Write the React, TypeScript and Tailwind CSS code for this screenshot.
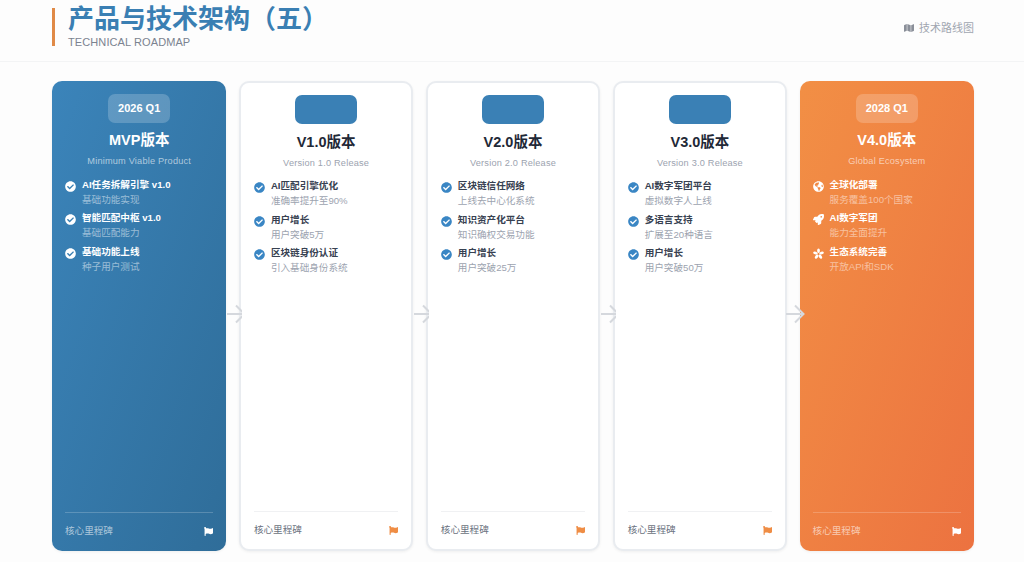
import { FaCheckCircle, FaFlag, FaGlobeAmericas, FaMap, FaRocket } from 'react-icons/fa';
import type { ReactNode } from 'react';

type Item = { title: string; desc: string; icon?: ReactNode };

type Phase = {
  tag: string;
  name: string;
  sub: string;
  items: Item[];
  tone: 'blue' | 'white' | 'orange';
};

function EcoIcon() {
  return (
    <svg viewBox="0 0 24 24" width="12" height="12" fill="currentColor">
      <ellipse cx="12" cy="5" rx="3" ry="5" />
      <ellipse cx="12" cy="5" rx="3" ry="5" transform="rotate(72 12 12)" />
      <ellipse cx="12" cy="5" rx="3" ry="5" transform="rotate(144 12 12)" />
      <ellipse cx="12" cy="5" rx="3" ry="5" transform="rotate(216 12 12)" />
      <ellipse cx="12" cy="5" rx="3" ry="5" transform="rotate(288 12 12)" />
    </svg>
  );
}

const phases: Phase[] = [
  {
    tag: '2026 Q1',
    name: 'MVP版本',
    sub: 'Minimum Viable Product',
    tone: 'blue',
    items: [
      { title: 'AI任务拆解引擎 v1.0', desc: '基础功能实现' },
      { title: '智能匹配中枢 v1.0', desc: '基础匹配能力' },
      { title: '基础功能上线', desc: '种子用户测试' },
    ],
  },
  {
    tag: '',
    name: 'V1.0版本',
    sub: 'Version 1.0 Release',
    tone: 'white',
    items: [
      { title: 'AI匹配引擎优化', desc: '准确率提升至90%' },
      { title: '用户增长', desc: '用户突破5万' },
      { title: '区块链身份认证', desc: '引入基础身份系统' },
    ],
  },
  {
    tag: '',
    name: 'V2.0版本',
    sub: 'Version 2.0 Release',
    tone: 'white',
    items: [
      { title: '区块链信任网络', desc: '上线去中心化系统' },
      { title: '知识资产化平台', desc: '知识确权交易功能' },
      { title: '用户增长', desc: '用户突破25万' },
    ],
  },
  {
    tag: '',
    name: 'V3.0版本',
    sub: 'Version 3.0 Release',
    tone: 'white',
    items: [
      { title: 'AI数字军团平台', desc: '虚拟数字人上线' },
      { title: '多语言支持', desc: '扩展至20种语言' },
      { title: '用户增长', desc: '用户突破50万' },
    ],
  },
  {
    tag: '2028 Q1',
    name: 'V4.0版本',
    sub: 'Global Ecosystem',
    tone: 'orange',
    items: [
      { title: '全球化部署', desc: '服务覆盖100个国家', icon: <FaGlobeAmericas /> },
      { title: 'AI数字军团', desc: '能力全面提升', icon: <FaRocket /> },
      { title: '生态系统完善', desc: '开放API和SDK', icon: <EcoIcon /> },
    ],
  },
];

function Connector({ solid, toOrange }: { solid: boolean; toOrange: boolean }) {
  return (
    <svg
      fill="none"
      stroke="#d5d8dd"
      strokeWidth="2"
      className={`absolute top-1/2 z-10 -mt-[12px] h-[20px] ${toOrange ? 'w-[19px]' : 'w-[15px]'} ${solid ? 'left-full' : 'left-[calc(100%+2px)]'} ${toOrange ? 'ml-[-1px]' : 'ml-[0.5px]'}`}
    >
      <path d="M0 10H17M9 1.5L17.5 10L9 18.5" />
    </svg>
  );
}

function PhaseCard({ phase, index }: { phase: Phase; index: number }) {
  const solid = phase.tone !== 'white';
  const bg =
    phase.tone === 'blue'
      ? 'bg-gradient-to-br from-[#3b84ba] to-[#2f6d99]'
      : phase.tone === 'orange'
        ? 'bg-gradient-to-br from-[#f28f45] to-[#ec7240]'
        : 'bg-white border-2 border-[#e9ecf0]';

  return (
    <div
      className={`relative flex min-w-0 flex-col rounded-[10px] px-[13px] shadow-[0_1px_3px_rgba(0,0,0,0.06)] ${bg} ${solid ? 'pt-[13px] pb-[11px]' : 'pt-[12px] pb-[10px]'}`}
    >
      <div className="flex flex-col items-center">
        <div
          className={`flex h-[29px] w-[62px] items-center justify-center rounded-[7px] text-[11px] font-bold ${
            solid ? 'bg-white/20 text-white' : 'bg-[#3a80b5] text-white'
          }`}
        >
          {phase.tag}
        </div>
        <div
          className={`text-[14.5px] leading-[22px] font-bold ${solid ? 'mt-[6px] text-white' : 'mt-[7px] text-[#1f2937]'}`}
        >
          {phase.name}
        </div>
        <div className={`mt-[1px] text-[9.2px] leading-[18px] tracking-[0.2px] ${solid ? 'text-white/60' : 'text-[#9ca3af]'}`}>
          {phase.sub}
        </div>
      </div>

      <div className={`flex flex-col gap-[3.5px] ${solid ? 'mt-[6.5px]' : 'mt-[6px]'}`}>
        {phase.items.map((item) => (
          <div key={item.title} className="flex items-start gap-[6px]">
            <span className={`mt-[4px] flex w-[11px] shrink-0 justify-center text-[11px] ${solid ? 'text-white' : 'text-[#3a86c4]'}`}>
              {item.icon ?? <FaCheckCircle />}
            </span>
            <div>
              <div className={`text-[9.6px] leading-[15px] font-bold ${solid ? 'text-white' : 'text-[#374151]'}`}>{item.title}</div>
              <div className={`text-[9.6px] leading-[15px] ${solid ? 'text-white/50' : 'text-[#9ca3af]'}`}>{item.desc}</div>
            </div>
          </div>
        ))}
      </div>

      <div className={`mt-auto flex items-center justify-between border-t pt-[9px] ${solid ? 'border-white/20' : 'border-[#f0f1f3]'}`}>
        <span className={`text-[9.6px] leading-[18px] ${solid ? 'text-white/60' : 'text-[#6b7280]'}`}>核心里程碑</span>
        <FaFlag className={`text-[9px] ${solid ? 'text-white' : 'text-[#ef8d45]'}`} />
      </div>

      {index < phases.length - 1 && <Connector solid={solid} toOrange={index === phases.length - 2} />}
    </div>
  );
}

export default function App() {
  return (
    <div className="flex h-[562px] w-[1024px] flex-col overflow-hidden bg-[#fdfdfd] font-['Liberation_Sans','Noto_Sans_CJK_SC',sans-serif]">
      <header className="flex h-[62px] shrink-0 items-center justify-between border-b border-[#f3f4f5] pr-[50px] pb-[7px] pl-[52px]">
        <div className="flex h-[38px] items-center border-l-[3px] border-[#e08a47] pl-[13px]">
          <div>
            <h1 className="text-[26px] leading-[28px] font-semibold text-[#3a7fb3] [text-spacing-trim:space-all] [font-feature-settings:'chws'_0]">
              产品与技术架构（五）
            </h1>
            <p className="mt-[2.5px] text-[11px] leading-[13px] tracking-[0.1px] text-[#7b8390]">TECHNICAL ROADMAP</p>
          </div>
        </div>
        <div className="mt-[2px] flex items-center gap-[5px] text-[11px] text-[#a0a6b0]">
          <FaMap className="text-[10px] text-[#8a8f99]" />
          <span>技术路线图</span>
        </div>
      </header>

      <main className="grid flex-1 grid-cols-5 gap-[12.5px] pt-[19px] pr-[50px] pb-[11px] pl-[52px]">
        {phases.map((phase, i) => (
          <PhaseCard key={phase.name} phase={phase} index={i} />
        ))}
      </main>
    </div>
  );
}
